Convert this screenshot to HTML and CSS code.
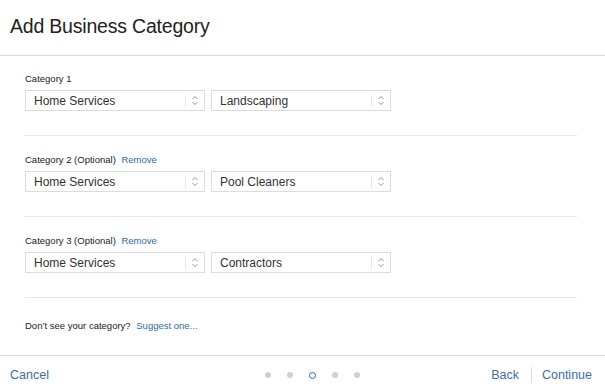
FILE: index.html
```html
<!DOCTYPE html>
<html>
<head>
<meta charset="utf-8">
<link rel="stylesheet" href="styles.css">
</head>
<body>
<div class="page">
  <header class="head"><h1 class="title">Add Business Category</h1></header>
  <main class="body">
    <section class="cat">
      <div class="label">Category 1</div>
      <div class="row">
        <div class="sel"><span class="val">Home Services</span><span class="arr"><svg width="8" height="11" viewBox="0 0 8 11"><path d="M1.5 4 L4 1.5 L6.5 4 M1.5 7 L4 9.5 L6.5 7" fill="none" stroke="#888" stroke-width="0.9"/></svg></span></div>
        <div class="sel"><span class="val">Landscaping</span><span class="arr"><svg width="8" height="11" viewBox="0 0 8 11"><path d="M1.5 4 L4 1.5 L6.5 4 M1.5 7 L4 9.5 L6.5 7" fill="none" stroke="#888" stroke-width="0.9"/></svg></span></div>
      </div>
    </section>
    <section class="cat">
      <div class="label">Category 2 (Optional) <a class="link small">Remove</a></div>
      <div class="row">
        <div class="sel"><span class="val">Home Services</span><span class="arr"><svg width="8" height="11" viewBox="0 0 8 11"><path d="M1.5 4 L4 1.5 L6.5 4 M1.5 7 L4 9.5 L6.5 7" fill="none" stroke="#888" stroke-width="0.9"/></svg></span></div>
        <div class="sel"><span class="val">Pool Cleaners</span><span class="arr"><svg width="8" height="11" viewBox="0 0 8 11"><path d="M1.5 4 L4 1.5 L6.5 4 M1.5 7 L4 9.5 L6.5 7" fill="none" stroke="#888" stroke-width="0.9"/></svg></span></div>
      </div>
    </section>
    <section class="cat">
      <div class="label">Category 3 (Optional) <a class="link small">Remove</a></div>
      <div class="row">
        <div class="sel"><span class="val">Home Services</span><span class="arr"><svg width="8" height="11" viewBox="0 0 8 11"><path d="M1.5 4 L4 1.5 L6.5 4 M1.5 7 L4 9.5 L6.5 7" fill="none" stroke="#888" stroke-width="0.9"/></svg></span></div>
        <div class="sel"><span class="val">Contractors</span><span class="arr"><svg width="8" height="11" viewBox="0 0 8 11"><path d="M1.5 4 L4 1.5 L6.5 4 M1.5 7 L4 9.5 L6.5 7" fill="none" stroke="#888" stroke-width="0.9"/></svg></span></div>
      </div>
    </section>
    <p class="suggest">Don’t see your category? <a class="link small">Suggest one...</a></p>
  </main>
  <footer class="foot">
    <a class="link big">Cancel</a>
    <div class="dots"><span class="dot"></span><span class="dot"></span><span class="dot cur"></span><span class="dot"></span><span class="dot"></span></div>
    <div class="nav"><a class="link big">Back</a><span class="vsep"></span><a class="link big">Continue</a></div>
  </footer>
</div>
</body>
</html>
```
FILE: styles.css
```css
* { box-sizing: border-box; }
html, body { margin: 0; padding: 0; background: #fff; }
body { font-family: "Liberation Sans", Arial, sans-serif; color: #222; width: 605px; height: 391px; overflow: hidden; }
.page { display: flex; flex-direction: column; height: 391px; }
.head { height: 56px; border-bottom: 1px solid #d9d9d9; padding: 13px 10px 0; }
.title { margin: 0; font-size: 19.5px; font-weight: normal; color: #222; line-height: 26px; letter-spacing: -0.2px; }
.body { flex: 1; padding: 0 28px 0 25px; }
.cat { border-bottom: 1px solid #e6e6e6; padding: 18px 0 24px; }
.cat:first-child { padding-top: 17px; }
.label { font-size: 9.5px; color: #222; line-height: 12px; height: 12px; margin-bottom: 5px; font-weight: 500; }
.link { color: #2e6aa8; text-decoration: none; }
.small { margin-left: 3px; }
.row { display: flex; gap: 6px; }
.sel { width: 180px; height: 21px; border: 1px solid #dcdcdc; display: flex; align-items: center; background: #fff; }
.val { flex: 1; font-size: 12px; color: #333; padding-left: 8px; line-height: 18px; }
.arr { width: 19px; height: 12px; border-left: 1px solid #e6e6e6; display: flex; align-items: center; justify-content: center; }
.suggest { margin: 22px 0 0; font-size: 9.5px; line-height: 12px; color: #222; }
.foot { height: 36px; border-top: 1px solid #d9d9d9; display: flex; align-items: center; padding: 3px 10px 0; justify-content: space-between; }
.big { font-size: 12.5px; color: #3b6fa6; }
.dots { display: flex; gap: 16px; align-items: center; margin-left: 216px; }
.dot { width: 6px; height: 6px; border-radius: 50%; background: #d0d0d0; }
.dot.cur { width: 7px; height: 7px; background: #fff; border: 1px solid #2e6aa8; }
.nav { display: flex; align-items: center; margin-left: auto; padding-right: 3px; }
.vsep { width: 1px; height: 16px; background: #ddd; margin: 0 10px 0 12px; }
```
